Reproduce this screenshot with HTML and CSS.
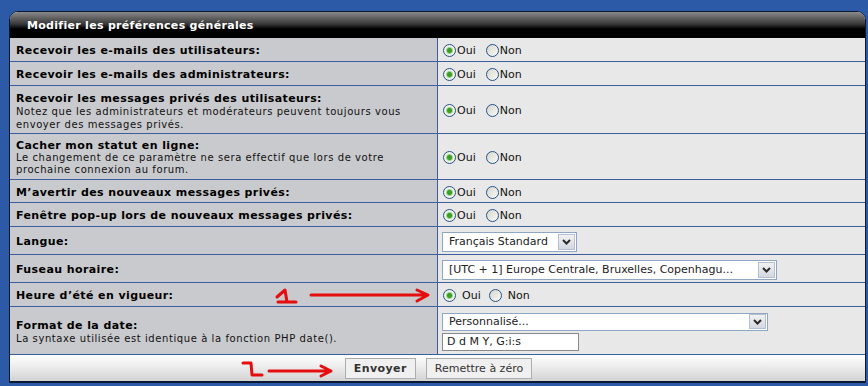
FILE: index.html
```html
<!DOCTYPE html>
<html lang="fr">
<head>
    <meta charset="UTF-8">
    <title>Modifier les préférences générales</title>
    <link rel="stylesheet" href="styles.css">
</head>
<body>
    <div class="panel">
        <div class="panel-head">Modifier les préférences générales</div>
        <div class="prefs">
            <div class="label r24">Recevoir les e-mails des utilisateurs:</div>
            <div class="field">
                <label class="opt"><input class="radio" type="radio" name="viewemail" checked>Oui</label>
                <label class="opt"><input class="radio" type="radio" name="viewemail">Non</label>
            </div>

            <div class="label r24">Recevoir les e-mails des administrateurs:</div>
            <div class="field">
                <label class="opt"><input class="radio" type="radio" name="massemail" checked>Oui</label>
                <label class="opt"><input class="radio" type="radio" name="massemail">Non</label>
            </div>

            <div class="label r48 pad3">Recevoir les messages privés des utilisateurs:
                <span class="hint">Notez que les administrateurs et modérateurs peuvent toujours vous envoyer des messages privés.</span>
            </div>
            <div class="field">
                <label class="opt"><input class="radio" type="radio" name="allowpm" checked>Oui</label>
                <label class="opt"><input class="radio" type="radio" name="allowpm">Non</label>
            </div>

            <div class="label r46 pad1">Cacher mon statut en ligne:
                <span class="hint tight">Le changement de ce paramètre ne sera effectif que lors de votre prochaine connexion au forum.</span>
            </div>
            <div class="field">
                <label class="opt"><input class="radio" type="radio" name="hideonline" checked>Oui</label>
                <label class="opt"><input class="radio" type="radio" name="hideonline">Non</label>
            </div>

            <div class="label r23">M’avertir des nouveaux messages privés:</div>
            <div class="field">
                <label class="opt"><input class="radio" type="radio" name="notifypm" checked>Oui</label>
                <label class="opt"><input class="radio" type="radio" name="notifypm">Non</label>
            </div>

            <div class="label r24">Fenêtre pop-up lors de nouveaux messages privés:</div>
            <div class="field">
                <label class="opt"><input class="radio" type="radio" name="popuppm" checked>Oui</label>
                <label class="opt"><input class="radio" type="radio" name="popuppm">Non</label>
            </div>

            <div class="label r28">Langue:</div>
            <div class="field">
                <div class="select sel-lang">
                    <span class="select-value">Français Standard</span>
                    <span class="select-arrow"><svg width="9" height="6" viewBox="0 0 9 6"><path d="M1 1l3.5 3.5L8 1" fill="none" stroke="#2a2a2a" stroke-width="2"/></svg></span>
                </div>
            </div>

            <div class="label r28">Fuseau horaire:</div>
            <div class="field">
                <div class="select sel-tz">
                    <span class="select-value">[UTC + 1] Europe Centrale, Bruxelles, Copenhagu...</span>
                    <span class="select-arrow"><svg width="9" height="6" viewBox="0 0 9 6"><path d="M1 1l3.5 3.5L8 1" fill="none" stroke="#2a2a2a" stroke-width="2"/></svg></span>
                </div>
            </div>

            <div class="label r24">Heure d’été en vigueur:</div>
            <div class="field">
                <label class="opt spaced"><input class="radio" type="radio" name="dst" checked>Oui</label>
                <label class="opt spaced"><input class="radio" type="radio" name="dst">Non</label>
            </div>

            <div class="label r48">Format de la date:
                <span class="hint">La syntaxe utilisée est identique à la fonction PHP date().</span>
            </div>
            <div class="field stack">
                <div class="select sel-date">
                    <span class="select-value">Personnalisé...</span>
                    <span class="select-arrow"><svg width="9" height="6" viewBox="0 0 9 6"><path d="M1 1l3.5 3.5L8 1" fill="none" stroke="#2a2a2a" stroke-width="2"/></svg></span>
                </div>
                <input class="text-input" type="text" value="D d M Y, G:i:s">
            </div>
        </div>
        <div class="panel-foot">
            <button class="btn btn-main" type="submit">Envoyer</button>
            <button class="btn" type="reset">Remettre à zéro</button>
        </div>
    </div>

    <!-- annotations drawn over the screenshot -->
    <svg class="marks" width="868" height="386" viewBox="0 0 868 386">
        <g fill="none" stroke="#e50d0d" stroke-width="3" stroke-linecap="round" stroke-linejoin="round">
            <path d="M277 297 L285 290 L287 302 M278 302 L296 302"/>
            <path d="M311 295 L427 295 M417 290 L428 295 L417 301"/>
            <path d="M243 363 L251 363 L252 375 L262 375"/>
            <path d="M269 371 L330 371 M321 366 L331 371 L321 376"/>
        </g>
    </svg>
</body>
</html>
```

FILE: styles.css
```css
body {
    margin: 0;
    background: #2c5aa6;
    font-family: "DejaVu Sans", Verdana, sans-serif;
    position: relative;
    height: 386px;
    overflow: hidden;
}
.panel {
    box-sizing: border-box;
    width: 857px;
    margin: 11px 0 0 9px;
    border: 1px solid #0c1731;
    border-radius: 9px 9px 0 0;
    overflow: hidden;
    background: #e8e8e8;
}
.panel-head {
    height: 26px;
    line-height: 27px;
    padding-left: 17px;
    color: #fff;
    font-size: 11px;
    font-weight: bold;
    letter-spacing: 0.3px;
    background: linear-gradient(#8a8a8a, #3a3a3a 45%, #000 65%, #000);
}
.prefs {
    display: grid;
    grid-template-columns: 428px 1fr;
}
.label {
    box-sizing: border-box;
    display: flex;
    flex-direction: column;
    justify-content: center;
    padding: 2px 6px 0;
    background: #c9cacd;
    border-right: 1px solid #3d5d9d;
    border-bottom: 1px solid #3d5d9d;
    font-size: 11px;
    font-weight: bold;
    letter-spacing: 0.4px;
    line-height: 13px;
    color: #000;
}
.hint {
    font-size: 10px;
    font-weight: normal;
    letter-spacing: 0.58px;
    line-height: 13px;
    color: #111;
}
.hint.tight {
    line-height: 12px;
}
.pad3 {
    padding-top: 4px;
}
.pad1 {
    padding-top: 2px;
}
.r23 { min-height: 23px; }
.r24 { min-height: 24px; }
.r28 { min-height: 28px; }
.r46 { min-height: 46px; }
.r48 { min-height: 48px; }
.field {
    box-sizing: border-box;
    display: flex;
    align-items: center;
    padding: 2px 4px 0;
    border-bottom: 1px solid #3d5d9d;
    font-size: 11px;
    color: #111;
}
.field.stack {
    flex-direction: column;
    align-items: flex-start;
    justify-content: center;
    gap: 2px;
}
.opt {
    display: inline-flex;
    align-items: center;
    margin-right: 9px;
}
.opt.spaced {
    margin-right: 7px;
}
.opt.spaced .radio {
    margin-right: 6px;
}
.radio {
    appearance: none;
    width: 13px;
    height: 13px;
    margin: 0 1px 0 1px;
    border: 1px solid #24528a;
    border-radius: 50%;
    background: linear-gradient(135deg, #d6d6cc, #fbfbf8);
}
.radio:checked {
    background: radial-gradient(circle, #3b9e26 0 2px, #9ad486 3px, #f2f2ec 4px);
}
.select {
    box-sizing: border-box;
    display: inline-flex;
    align-items: center;
    justify-content: space-between;
    height: 20px;
    margin-left: 0;
    border: 1px solid #8fa6c4;
    background: #fff;
}
.select-value {
    padding: 0 6px;
    font-size: 11px;
    color: #222;
    white-space: nowrap;
}
.select-arrow {
    box-sizing: border-box;
    display: flex;
    align-items: center;
    justify-content: center;
    width: 17px;
    height: 16px;
    margin-right: 1px;
    border: 1px solid #b4bfd2;
    background: linear-gradient(#f2f2f2, #d3d7e0);
}
.sel-lang { width: 135px; }
.sel-tz { width: 335px; }
.sel-date {
    width: 326px;
    height: 18px;
}
.sel-date .select-arrow {
    height: 15px;
}
.text-input {
    box-sizing: border-box;
    width: 137px;
    height: 18px;
    margin: 0;
    padding: 0 4px;
    border: 1px solid #8a8a8a;
    font-family: "DejaVu Sans", Verdana, sans-serif;
    font-size: 11px;
    color: #222;
}
.panel-foot {
    height: 26px;
    display: flex;
    justify-content: center;
    align-items: center;
    gap: 10px;
    padding-left: 2px;
    border-bottom: 1px solid #0c1731;
    background: linear-gradient(#fff, #e6e6e6 60%, #d2d2d2);
}
.btn {
    height: 21px;
    padding: 0 8px;
    border: 1px solid #adadad;
    background: #f0f0f0;
    font-family: "DejaVu Sans", Verdana, sans-serif;
    font-size: 11px;
    color: #333;
}
.btn-main {
    width: 71px;
    font-weight: bold;
    letter-spacing: 0.4px;
}
.marks {
    position: absolute;
    top: 0;
    left: 0;
    pointer-events: none;
}
```
